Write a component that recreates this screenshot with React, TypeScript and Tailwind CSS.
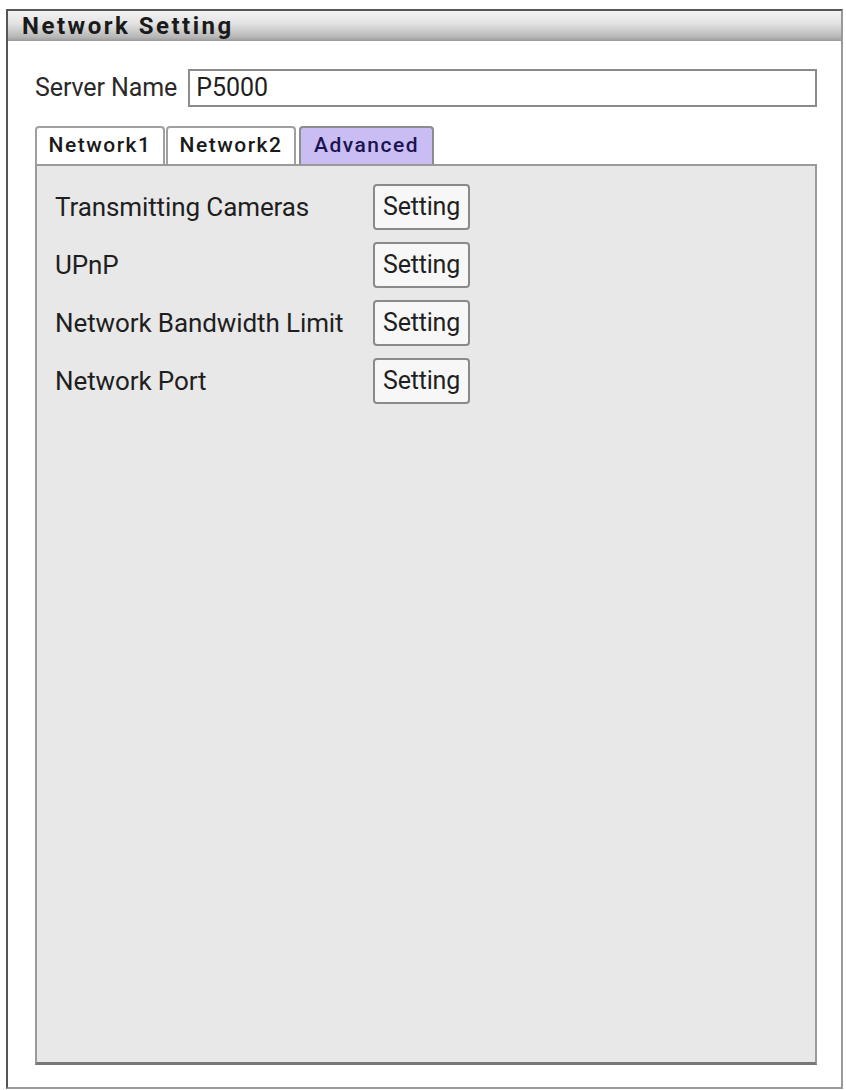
import React from "react";

const rows = [
  "Transmitting Cameras",
  "UPnP",
  "Network Bandwidth Limit",
  "Network Port",
];

const tabs = ["Network1", "Network2", "Advanced"];

const SettingRow = ({ label }: { label: string }) => (
  <div className="flex items-center h-[46px]">
    <span className="w-[318px] text-[26px] text-[#1f1f1f] tracking-[-0.1px] whitespace-nowrap">{label}</span>
    <button className="h-[46px] w-[97px] rounded-[4px] border-2 border-[#8a8a8a] bg-[#f7f7f7] text-[25px] text-[#1f1f1f] tracking-[-0.2px]">
      Setting
    </button>
  </div>
);

const App = () => {
  const active = "Advanced";

  return (
    <div className="w-[846px] h-[1090px] bg-white pt-[9px] pl-[6px] font-['Roboto',sans-serif]">
      <div className="w-[837px] h-[1080px] border-2 border-[#555] border-r-[#999] border-b-[#999] flex flex-col">
        {/* title bar */}
        <div className="h-[30px] flex items-end pl-[14px] bg-[linear-gradient(to_bottom,#f2f2f2_0%,#e4e4e4_40%,#c8c8c8_70%,#b4b4b4_88%,#9a9a9a_100%)]">
          <span className="text-[24px] leading-[30px] font-bold text-[#1a1a1a] tracking-[2.5px]">Network Setting</span>
        </div>

        <div className="flex-1 flex flex-col pl-[27px] pr-[24px] pt-[28px] pb-[22px]">
          <div className="flex items-center h-[38px]">
            <span className="text-[25px] text-[#2a2a2a] mr-[11px] tracking-[-0.1px]">Server Name</span>
            <div className="flex-1 h-[38px] border-2 border-[#8c8c8c] flex items-center pl-[6px] text-[25px] text-[#1f1f1f]">
              P5000
            </div>
          </div>

          <div className="flex mt-[19px] h-[38px] items-end">
            {tabs.map((t) => (
              <div
                key={t}
                className={
                  t === active
                    ? "h-[38px] w-[135px] ml-[2px] rounded-t-[4px] border-2 border-b-0 border-[#8c8c8c] bg-[#c9bdf3] text-[#1c1450] text-[21px] font-medium tracking-[1.5px] flex items-center justify-center"
                    : "h-[38px] w-[130px] mr-[1px] rounded-t-[4px] border-2 border-b-0 border-[#a0a0a0] bg-white text-[#1a1a1a] text-[21px] font-medium tracking-[1.5px] flex items-center justify-center"
                }
              >
                {t}
              </div>
            ))}
          </div>

          <div className="flex-1 bg-[#e8e8e8] border-2 border-[#9a9a9a] border-b-[3px] border-b-[#777] pt-[18px] pl-[18px] flex flex-col gap-[12px]">
            {rows.map((r) => (
              <SettingRow key={r} label={r} />
            ))}
          </div>
        </div>
      </div>
    </div>
  );
};

export default App;
